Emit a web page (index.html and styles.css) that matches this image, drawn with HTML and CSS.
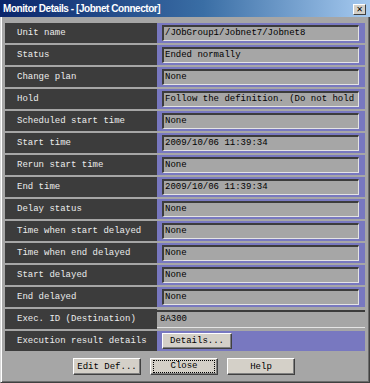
FILE: index.html
```html
<!DOCTYPE html>
<html lang="en">
<head>
  <meta charset="UTF-8" />
  <title>Monitor Details - [Jobnet Connector]</title>
  <link rel="stylesheet" href="styles.css">
</head>
<body>
  <div class="window">
    <div class="titlebar">
      <span class="title">Monitor Details - [Jobnet Connector]</span>
      <span class="close-x">&#x2715;</span>
    </div>

    <div class="rows">
      <div class="row"><div class="label">Unit name</div><div class="value"><div class="field">/JObGroup1/Jobnet7/Jobnet8</div></div></div>
      <div class="row"><div class="label">Status</div><div class="value"><div class="field">Ended normally</div></div></div>
      <div class="row"><div class="label">Change plan</div><div class="value"><div class="field">None</div></div></div>
      <div class="row"><div class="label">Hold</div><div class="value"><div class="field">Follow the definition. (Do not hold</div></div></div>
      <div class="row"><div class="label">Scheduled start time</div><div class="value"><div class="field">None</div></div></div>
      <div class="row"><div class="label">Start time</div><div class="value"><div class="field">2009/10/06 11:39:34</div></div></div>
      <div class="row"><div class="label">Rerun start time</div><div class="value"><div class="field">None</div></div></div>
      <div class="row"><div class="label">End time</div><div class="value"><div class="field">2009/10/06 11:39:34</div></div></div>
      <div class="row"><div class="label">Delay status</div><div class="value"><div class="field">None</div></div></div>
      <div class="row"><div class="label">Time when start delayed</div><div class="value"><div class="field">None</div></div></div>
      <div class="row"><div class="label">Time when end delayed</div><div class="value"><div class="field">None</div></div></div>
      <div class="row"><div class="label">Start delayed</div><div class="value"><div class="field">None</div></div></div>
      <div class="row"><div class="label">End delayed</div><div class="value"><div class="field">None</div></div></div>
      <div class="row"><div class="label">Exec. ID (Destination)</div><div class="value plain"><div class="field flat">8A300</div></div></div>
      <div class="row"><div class="label">Execution result details</div><div class="value"><button class="btn small">Details...</button></div></div>
    </div>

    <div class="buttons">
      <button class="btn">Edit Def...</button>
      <button class="btn focus"><span>Close</span></button>
      <button class="btn">Help</button>
    </div>
  </div>
</body>
</html>
```

FILE: styles.css
```css
html, body {
  margin: 0;
  padding: 0;
}
body {
  width: 370px;
  height: 383px;
  overflow: hidden;
  background: #a6a6a6;
}
.window {
  box-sizing: border-box;
  width: 370px;
  height: 383px;
  background: #a6a6a6;
  border-left: 1px solid #d8d8d8;
  border-right: 1px solid #404040;
  border-bottom: 1px solid #404040;
  box-shadow: inset 1px 0 0 #ffffff, inset -1px -1px 0 #6c6c6c;
}
.titlebar {
  height: 17px;
  margin-left: -1px;
  margin-right: -1px;
  display: flex;
  align-items: center;
  justify-content: space-between;
  padding: 0 4px 0 3px;
  background: linear-gradient(to right, #0a246a, #3a6ea5 55%, #a6caf0);
}
.title {
  color: #ffffff;
  font-family: "Liberation Sans", Arial, sans-serif;
  font-weight: bold;
  font-size: 10px;
  letter-spacing: -0.45px;
}
.close-x {
  box-sizing: border-box;
  width: 13px;
  height: 11px;
  margin-top: 1px;
  background: #d4d0c8;
  border-top: 1px solid #ffffff;
  border-left: 1px solid #ffffff;
  border-right: 1px solid #404040;
  border-bottom: 1px solid #404040;
  font-family: "DejaVu Sans", sans-serif;
  font-size: 8px;
  font-weight: bold;
  line-height: 9px;
  text-align: center;
  color: #000;
}
.rows {
  display: flex;
  flex-direction: column;
  gap: 2px;
  padding: 6px 4px 0 4px;
}
.row {
  display: flex;
  height: 20px;
}
.label {
  width: 140px;
  flex: none;
  background: #3c3c3c;
  color: #ececec;
  font-family: "Liberation Mono", "DejaVu Sans Mono", monospace;
  font-size: 9px;
  line-height: 21px;
  padding-left: 12px;
}
.value {
  flex: 1;
  background: #7878c0;
  padding: 2px 6px 2px 5px;
  display: flex;
  align-items: center;
}
.value.plain {
  background: #a6a6a6;
  padding: 0;
}
.field {
  box-sizing: border-box;
  flex: 1;
  height: 16px;
  background: #a6a6a6;
  border-top: 2px solid #3c3c3c;
  border-left: 2px solid #3c3c3c;
  border-right: 1px solid #e4e4e4;
  border-bottom: 1px solid #e4e4e4;
  color: #000;
  font-family: "Liberation Mono", "DejaVu Sans Mono", monospace;
  font-size: 9px;
  line-height: 13px;
  padding-left: 1px;
  white-space: nowrap;
  overflow: hidden;
}
.field.flat {
  height: 18px;
  border-left: none;
  border-right: none;
  line-height: 15px;
  padding-left: 3px;
}
.btn {
  box-sizing: border-box;
  height: 17px;
  background: #d4d0c8;
  border-top: 1px solid #ffffff;
  border-left: 1px solid #ffffff;
  border-right: 1px solid #404040;
  border-bottom: 1px solid #404040;
  box-shadow: inset -1px -1px 0 #808080;
  border-radius: 0;
  padding: 0;
  color: #000;
  font-family: "Liberation Mono", "DejaVu Sans Mono", monospace;
  font-size: 9px;
}
.btn.small {
  width: 70px;
  height: 16px;
}
.buttons {
  display: flex;
  justify-content: center;
  gap: 9px;
  padding-top: 7px;
  padding-right: 2px;
}
.buttons .btn {
  width: 68px;
}
.btn.focus span {
  display: block;
  margin: 0 2px;
  border: 1px dotted #000;
  line-height: 11px;
}
```
